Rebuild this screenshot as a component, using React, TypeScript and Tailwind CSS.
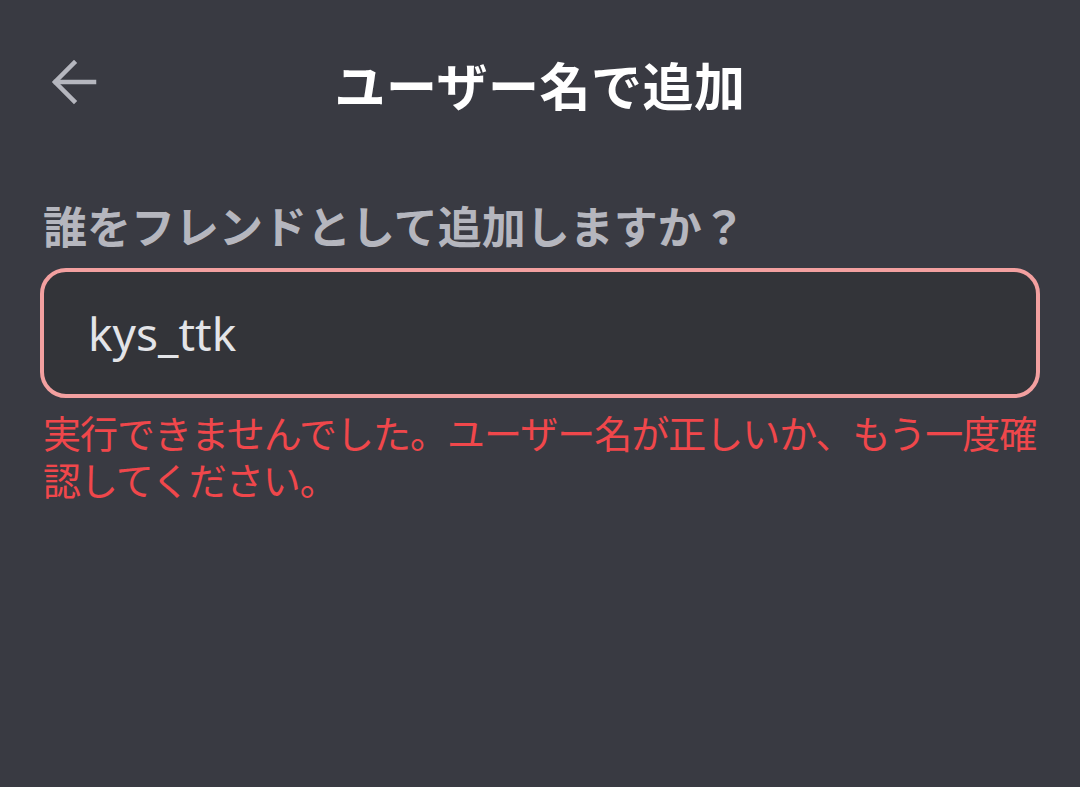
import React from "react";

export default function App() {
  const jp = { fontFamily: '"Noto Sans CJK JP", "Noto Sans", sans-serif' };
  return (
    <div className="w-[1080px] h-[787px] bg-[#393a42] overflow-hidden" style={jp}>
      <div className="relative h-[170px] flex items-center justify-center">
        <svg
          className="absolute left-[50px] top-[59px]"
          width="48"
          height="46"
          viewBox="0 0 48 46"
          fill="none"
          stroke="#b5b6be"
          strokeWidth="4.5"
          strokeLinecap="square"
        >
          <path d="M24 4 L5 23 L24 42" />
          <path d="M6 23 L44 23" />
        </svg>
        <h1 className="text-[51px] leading-[60px] font-bold text-white tracking-[0.5px] -mt-[2px]">ユーザー名で追加</h1>
      </div>
      <div className="px-[43px] pt-[29px]">
        <p className="text-[44px] leading-[52px] font-bold text-[#b5b6be]">誰をフレンドとして追加しますか？</p>
        <div className="mt-[17px] -mx-[3px] h-[130px] rounded-[26px] border-[4px] border-[#f3a0a0] bg-[#333439] flex items-center pl-[44px]">
          <span
            className="text-[46px] text-[#e3e4e8]"
            style={{ fontFamily: '"Noto Sans", sans-serif' }}
          >
            kys_ttk
          </span>
        </div>
        <p className="mt-[10px] text-[38px] leading-[47px] tracking-[-1px] text-[#f0474b] -mr-[20px]">
          実行できませんでした。ユーザー名が正しいか、もう一度確認してください。
        </p>
      </div>
    </div>
  );
}
